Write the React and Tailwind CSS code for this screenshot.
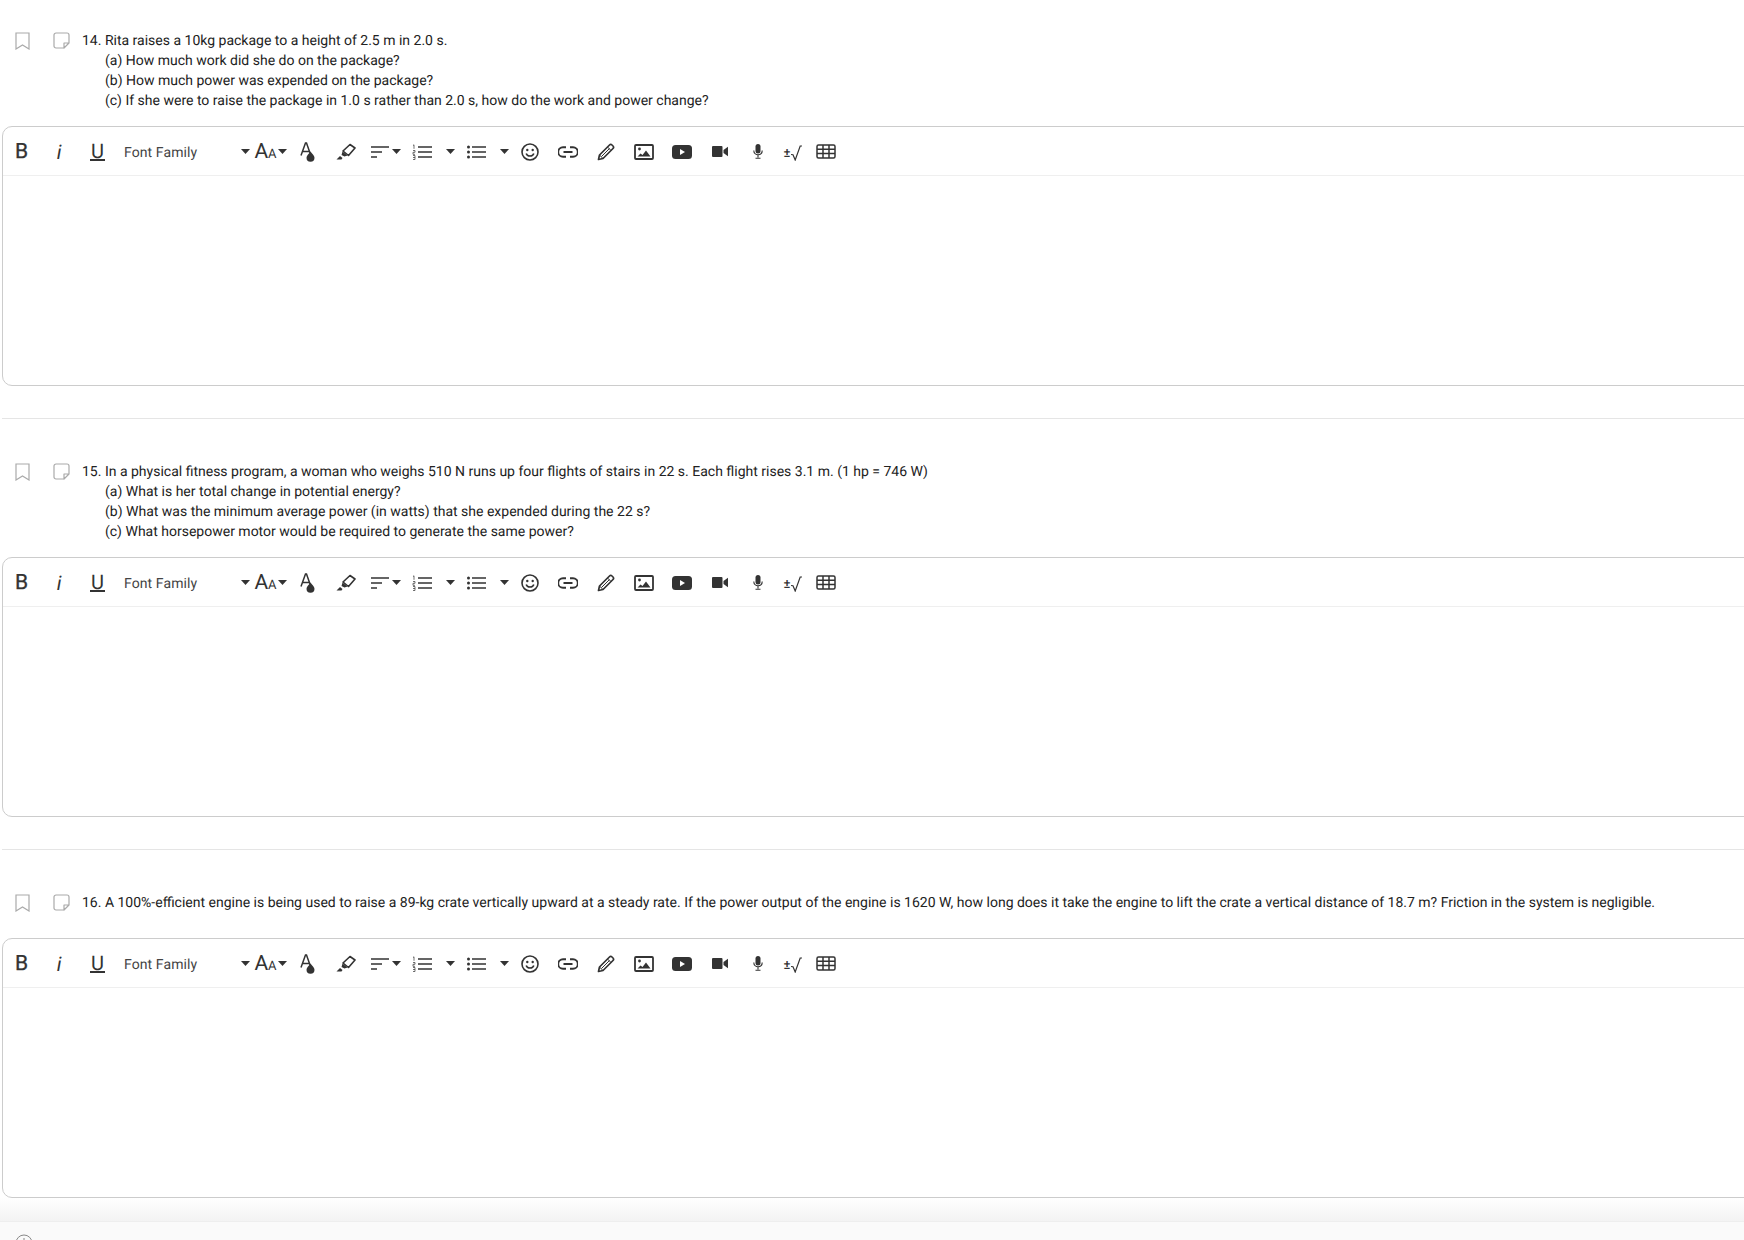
import React from 'react';

const Caret = ({ className = '' }) => (
  <svg width="9" height="5" viewBox="0 0 9 5" className={className}>
    <path d="M0 0h9L4.5 5z" fill="#333" />
  </svg>
);

const Ic = ({ w = 20, h = 20, sw = 1.6, children }) => (
  <svg width={w} height={h} viewBox={`0 0 ${w} ${h}`} fill="none" stroke="#333" strokeWidth={sw}>
    {children}
  </svg>
);

function Toolbar() {
  return (
    <div className="flex items-center h-[49px] pt-[1px] border-b border-[#efefef] text-[#333]">
      <div className="w-[37px] flex justify-center pt-[2px] text-[21px] leading-none [-webkit-text-stroke:0.3px_#333]">B</div>
      <div className="w-[38px] flex justify-center pt-[1px] text-[20px] italic leading-none">i</div>
      <div className="w-[39px] flex justify-center">
        <span className="text-[20px] leading-[16px] h-[18px] w-[15px] border-b-2 border-[#333] flex justify-center">U</span>
      </div>
      <div className="w-[135px] flex items-center pl-[7px] pr-[2px] justify-between text-[14px] text-[#444]">
        <span className="pt-[3px] tracking-[0.1px]">Font Family</span>
        <Caret />
      </div>
      <div className="w-[37px] flex items-center justify-center gap-px">
        <span className="flex items-baseline leading-none pt-[2px]">
          <span className="text-[21px]">A</span>
          <span className="text-[13px]">A</span>
        </span>
        <Caret />
      </div>
      <div className="w-[38px] flex justify-center">
        <Ic w={16} h={21} sw={1.5}>
          <path d="M1 14.5L5.5 2h1L10 12M2.5 10.5h6.5" />
          <path d="M10.5 10.5c1.8 2.4 4 4 4 6.3a4 4 0 0 1-8 0c0-2.3 2.2-3.9 4-6.3z" fill="#333" stroke="none" />
        </Ic>
      </div>
      <div className="w-[38px] flex justify-center">
        <Ic w={20} h={17} sw={1.6}>
          <path d="M7 8L14 1.5l5 3.5-6.5 7.5z" strokeLinejoin="round" />
          <path d="M6.5 8.5L5.5 12l3 1.5 3-1z" fill="#333" stroke="none" />
          <path d="M0.5 16.5l3.5-3.5 2.5 2-1 1.5z" fill="#333" stroke="none" />
        </Ic>
      </div>
      <div className="w-[38px] flex items-center pl-[6px] gap-[2px]">
        <Ic w={19} h={14} sw={1.7}>
          <path d="M0 2h18M0 7h11M0 12h6" />
        </Ic>
        <Caret />
      </div>
      <div className="w-[57px] flex items-center pl-[9px] gap-[14px]">
        <svg width="20" height="16" viewBox="0 0 20 16" fill="none" stroke="#333">
          <path d="M6 3h14M6 8h14M6 13h14" strokeWidth="1.7" />
          <path d="M1 1.5l1-.7v4M1 6.5h2v1.8H1v2h2M1 11.5h2v4H1M1 13.5h2" strokeWidth="0.7" />
        </svg>
        <Caret />
      </div>
      <div className="w-[52px] flex items-center pl-[7px] gap-[14px]">
        <svg width="19" height="14" viewBox="0 0 19 14" fill="none" stroke="#333">
          <path d="M5 2h14M5 7h14M5 12h14" strokeWidth="1.7" />
          <circle cx="1.5" cy="2" r="1.5" fill="#333" stroke="none" />
          <circle cx="1.5" cy="7" r="1.5" fill="#333" stroke="none" />
          <circle cx="1.5" cy="12" r="1.5" fill="#333" stroke="none" />
        </svg>
        <Caret />
      </div>
      <div className="w-[37px] flex justify-center -translate-x-px">
        <Ic w={18} h={18}>
          <circle cx="9" cy="9" r="8" />
          <path d="M5.2 10.5c1 3.4 6.6 3.4 7.6 0" />
          <circle cx="6.3" cy="7" r="1.2" fill="#333" stroke="none" />
          <circle cx="11.7" cy="7" r="1.2" fill="#333" stroke="none" />
        </Ic>
      </div>
      <div className="w-[38px] flex justify-center">
        <Ic w={20} h={12} sw={1.9}>
          <path d="M8 1.2H5a4.8 4.8 0 0 0 0 9.6h3M12 1.2h3a4.8 4.8 0 0 1 0 9.6h-3M5.5 6h9" />
        </Ic>
      </div>
      <div className="w-[38px] flex justify-center">
        <Ic w={18} h={18} sw={1.7}>
          <path d="M1.5 16.5l1-4.5L12.5 2a1.8 1.8 0 0 1 2.5 0l1 1a1.8 1.8 0 0 1 0 2.5L6 15.5z" strokeLinejoin="round" />
          <path d="M10.5 4l3.5 3.5M2.5 12L6 15.5M4.5 13.5l8-8" strokeWidth="1" />
        </Ic>
      </div>
      <div className="w-[38px] flex justify-center">
        <Ic w={20} h={16} sw={1.8}>
          <rect x="1" y="1" width="18" height="14" rx="1" />
          <circle cx="5.5" cy="5" r="1.4" fill="#333" stroke="none" />
          <path d="M3.5 12.5l3-3 2 1.5 3.5-4.5 4.5 6z" fill="#333" stroke="none" />
        </Ic>
      </div>
      <div className="w-[38px] flex justify-center">
        <svg width="20" height="14" viewBox="0 0 20 14">
          <rect width="20" height="14" rx="3.5" fill="#333" />
          <path d="M8 4l5 3-5 3z" fill="#fff" />
        </svg>
      </div>
      <div className="w-[38px] flex justify-center">
        <svg width="16" height="11" viewBox="0 0 16 11" fill="#333">
          <rect width="10.5" height="11" rx="1" />
          <path d="M11.5 4L16 .8v9.4L11.5 7z" />
        </svg>
      </div>
      <div className="w-[38px] flex justify-center">
        <svg width="10" height="15" viewBox="0 0 10 15" fill="none" stroke="#333">
          <rect x="2.5" y="0" width="5" height="9.5" rx="2.5" fill="#333" stroke="none" />
          <path d="M.8 6.5c0 5.6 8.4 5.6 8.4 0M5 10.5v3M2.5 14.2h5" strokeWidth="1.1" />
        </svg>
      </div>
      <div className="w-[32px] flex justify-center items-end gap-[1px] text-[#333]">
        <span className="text-[13px] leading-none mb-[-1px] font-medium">±</span>
        <svg width="11" height="16" viewBox="0 0 11 16" fill="none" stroke="#333" strokeWidth="1.2" className="-mb-[2px]">
          <path d="M0 9.5l2 .2 2.2 5.3L9.2 1H11" />
        </svg>
      </div>
      <div className="w-[34px] flex justify-center">
        <Ic w={20} h={15} sw={1.5}>
          <rect x="1" y="1" width="18" height="13" rx="1.5" />
          <path d="M1 5.3h18M1 9.6h18M7 1v13M13 1v13" />
        </Ic>
      </div>
    </div>
  );
}

function Question({ first, rest }) {
  return (
    <div className="flex items-start min-h-[31px] mb-[15px]">
      <svg width="15" height="18" viewBox="0 0 15 18" fill="none" stroke="#aaa" strokeWidth="1.2" className="ml-[15px] mt-[2px] shrink-0">
        <path d="M1 1h13v16l-6.5-4L1 17z" />
      </svg>
      <svg width="17" height="17" viewBox="0 0 17 17" fill="none" stroke="#aaa" strokeWidth="1.2" className="ml-[23px] mt-[2px] shrink-0">
        <path d="M11 16H3a2 2 0 0 1-2-2V3a2 2 0 0 1 2-2h11a2 2 0 0 1 2 2v8l-5 5v-5h5" strokeLinejoin="round" />
      </svg>
      <div className="ml-[12px] pt-[1px] text-[14px] leading-5 text-[#222] whitespace-nowrap">
        <div>{first}</div>
        {rest && rest.map((r) => <div key={r} className="pl-[23px]">{r}</div>)}
      </div>
    </div>
  );
}

function Editor() {
  return (
    <div className="ml-[2px] w-[1780px] h-[260px] border border-[#ccc] rounded-[10px] bg-white">
      <Toolbar />
    </div>
  );
}

export default function App() {
  return (
    <div className="h-screen w-full overflow-hidden bg-white font-['Roboto',sans-serif] [text-rendering:geometricPrecision] flex flex-col">
      <div className="pt-[30px] shrink-0">
        <Question
          first="14. Rita raises a 10kg package to a height of 2.5 m in 2.0 s."
          rest={[
            '(a) How much work did she do on the package?',
            '(b) How much power was expended on the package?',
            '(c) If she were to raise the package in 1.0 s rather than 2.0 s, how do the work and power change?',
          ]}
        />
        <Editor />
        <div className="ml-[2px] mt-[32px] mb-[42px] border-t border-[#e5e5e5]" />
        <Question
          first="15. In a physical fitness program, a woman who weighs 510 N runs up four flights of stairs in 22 s. Each flight rises 3.1 m. (1 hp = 746 W)"
          rest={[
            '(a) What is her total change in potential energy?',
            '(b) What was the minimum average power (in watts) that she expended during the 22 s?',
            '(c) What horsepower motor would be required to generate the same power?',
          ]}
        />
        <Editor />
        <div className="ml-[2px] mt-[32px] mb-[42px] border-t border-[#e5e5e5]" />
        <Question first="16. A 100%-efficient engine is being used to raise a 89-kg crate vertically upward at a steady rate. If the power output of the engine is 1620 W, how long does it take the engine to lift the crate a vertical distance of 18.7 m? Friction in the system is negligible." />
        <Editor />
      </div>
      <div className="h-[23px] shrink-0 bg-gradient-to-b from-white to-[#f3f3f3]" />
      <div className="flex-1 min-h-0 overflow-hidden bg-[#fafafa] border-t border-[#eee] pl-[15px] pt-[12px]">
        <svg width="18" height="18" viewBox="0 0 18 18" fill="none" stroke="#888" strokeWidth="1">
          <circle cx="9" cy="9" r="8" />
          <path d="M9 4v6" />
        </svg>
      </div>
    </div>
  );
}
